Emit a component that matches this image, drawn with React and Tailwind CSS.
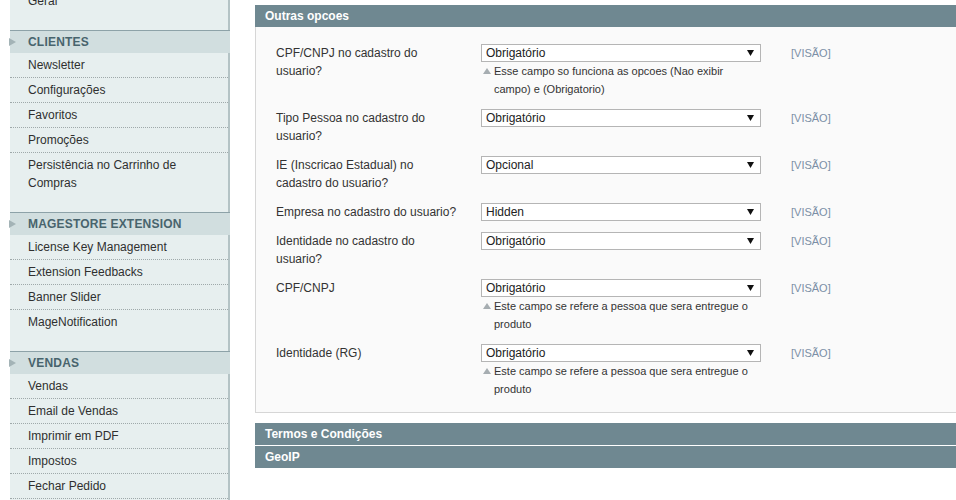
const groups = [
  {
    title: null,
    items: ["Geral"],
  },
  {
    title: "Clientes",
    items: ["Newsletter", "Configurações", "Favoritos", "Promoções", "Persistência no Carrinho de Compras"],
  },
  {
    title: "Magestore Extension",
    items: ["License Key Management", "Extension Feedbacks", "Banner Slider", "MageNotification"],
  },
  {
    title: "Vendas",
    items: ["Vendas", "Email de Vendas", "Imprimir em PDF", "Impostos", "Fechar Pedido", "Ajuda"],
    open: true,
  },
];

const fields = [
  {
    label: "CPF/CNPJ no cadastro do usuario?",
    value: "Obrigatório",
    note: "Esse campo so funciona as opcoes (Nao exibir campo) e (Obrigatorio)",
  },
  { label: "Tipo Pessoa no cadastro do usuario?", value: "Obrigatório" },
  { label: "IE (Inscricao Estadual) no cadastro do usuario?", value: "Opcional" },
  { label: "Empresa no cadastro do usuario?", value: "Hidden" },
  { label: "Identidade no cadastro do usuario?", value: "Obrigatório" },
  {
    label: "CPF/CNPJ",
    value: "Obrigatório",
    note: "Este campo se refere a pessoa que sera entregue o produto",
  },
  {
    label: "Identidade (RG)",
    value: "Obrigatório",
    note: "Este campo se refere a pessoa que sera entregue o produto",
  },
];

const SideGroup = ({ group, first }) => (
  <div className={first ? "-mt-[11px]" : ""}>
    {group.title && (
      <div className="flex h-[23px] items-center border-t border-[#8da2a8] bg-[#d1dedf]">
        <svg width="7" height="8" viewBox="0 0 7 8" className="-ml-px mr-[12px]">
          <path d="M0 0 L7 4 L0 8 Z" fill="#a3b3b6" />
        </svg>
        <span className="text-[12px] font-bold uppercase tracking-[0.2px] text-[#48646d]">{group.title}</span>
      </div>
    )}
    <ul>
      {group.items.map((item, i) => {
        const last = i === group.items.length - 1 && !group.open;
        return (
          <li key={item} className="border-r-2 border-[#b4c3c5] bg-[#e7efef]">
            <div
              className={`pl-[18px] pr-4 pt-[3px] text-[12px] leading-[18px] text-[#2f2f2f] ${
                last ? "pb-[20px]" : "border-b border-dotted border-[#9fa9aa] pb-[3px]"
              }`}
            >
              {item}
            </div>
          </li>
        );
      })}
    </ul>
  </div>
);

const FakeSelect = ({ value }) => (
  <div className="flex h-[18px] w-[280px] items-center justify-between border border-[#b5b5b5] bg-white pl-[4px] pr-[6px] text-[12px] text-[#222]">
    <span>{value}</span>
    <svg width="7" height="6" viewBox="0 0 7 6">
      <path d="M0 0 L7 0 L3.5 6 Z" fill="#111" />
    </svg>
  </div>
);

const FieldRow = ({ field }) => (
  <div className="flex py-[5.5px]">
    <div className="w-[205px] pr-[20px] leading-[18px] text-[#333]">{field.label}</div>
    <div className="w-[310px]">
      <FakeSelect value={field.value} />
      {field.note && (
        <div className="flex w-[280px] items-start text-[11px] leading-[18px] text-[#333]">
          <svg width="8" height="6" viewBox="0 0 8 6" className="ml-[2px] mr-[3px] mt-[6px] shrink-0">
            <path d="M0 6 L4 0 L8 6 Z" fill="#a6adb1" />
          </svg>
          <span>{field.note}</span>
        </div>
      )}
    </div>
    <div className="pt-[1px] text-[11px] leading-[16px] text-[#7b8fa6]">[VISÃO]</div>
  </div>
);

const SectionBar = ({ title, className = "" }) => (
  <div className={`flex h-[22px] items-center bg-[#6f8891] pl-[10px] text-[12px] font-bold text-white ${className}`}>
    {title}
  </div>
);

export default function App() {
  return (
    <div
      className="flex h-[500px] w-[956px] overflow-hidden bg-white text-[12px]"
      style={{ fontFamily: '"Liberation Sans", Arial, sans-serif' }}
    >
      <aside className="ml-[10px] w-[220px] shrink-0">
        {groups.map((group, i) => (
          <SideGroup key={group.title ?? "root"} group={group} first={i === 0} />
        ))}
      </aside>
      <main className="ml-[25px] mt-[5px] w-[720px] shrink-0">
        <SectionBar title="Outras opcoes" />
        <div className="border-b border-l border-[#d6d6d6] bg-[#fafafa] pb-[9px] pl-[20px] pt-[11px]">
          {fields.map((field) => (
            <FieldRow key={field.label} field={field} />
          ))}
        </div>
        <SectionBar title="Termos e Condições" className="mt-[10px]" />
        <SectionBar title="GeoIP" className="mt-[1px]" />
      </main>
    </div>
  );
}
